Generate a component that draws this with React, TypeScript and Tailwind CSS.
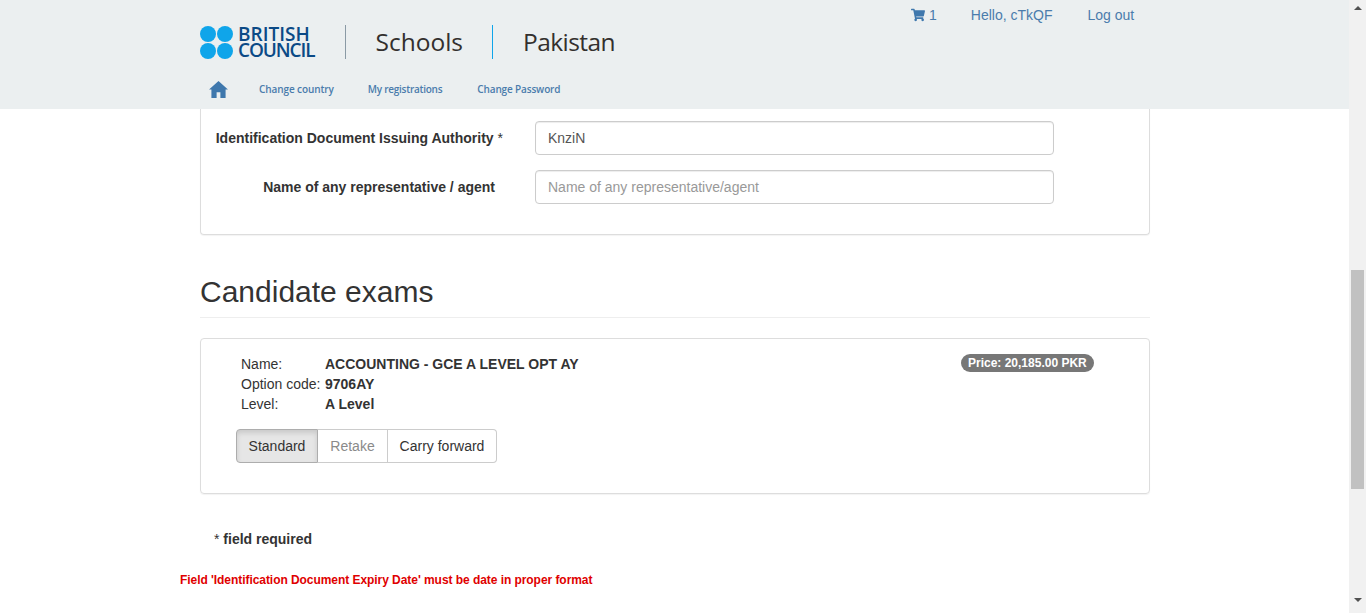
import { FaShoppingCart } from 'react-icons/fa';

function Logo() {
  return (
    <div className="flex items-center gap-[5px]">
      <div className="grid grid-cols-2 gap-x-px gap-y-px w-[33px]">
        <span className="w-4 h-4 rounded-full bg-[#0fa5ea]" />
        <span className="w-4 h-4 rounded-full bg-[#0fa5ea]" />
        <span className="w-4 h-4 rounded-full bg-[#0fa5ea]" />
        <span className="w-4 h-4 rounded-full bg-[#0fa5ea]" />
      </div>
      <div className="font-['Open_Sans',sans-serif] text-[19px] leading-[16px] font-semibold text-[#0b4a86]">
        <div>BRITISH</div>
        <div className="tracking-[-1.1px]">COUNCIL</div>
      </div>
    </div>
  );
}

function Header() {
  return (
    <header className="h-[109px] bg-[#ebeff0] shrink-0">
      <div className="w-[950px] ml-[200px] relative">
        <div className="flex items-center pt-[25px] h-[59px]">
          <Logo />
          <div className="w-px h-[34px] bg-[#8a9aa5] ml-[31px]" />
          <span className="font-['Open_Sans',sans-serif] text-[24.5px] text-[#33302e] ml-[29px] -mt-[2px]">Schools</span>
          <div className="w-px h-[34px] bg-[#0fa5ea] ml-[29px]" />
          <span className="font-['Open_Sans',sans-serif] text-[24.5px] tracking-[-0.55px] text-[#33302e] ml-[30px] -mt-[2px]">Pakistan</span>
        </div>
        <nav className="flex items-center h-[30px] mt-[15px] font-['Open_Sans',sans-serif] text-[10px] font-semibold tracking-[-0.1px] text-[#4a7cac]">
          <svg viewBox="0 0 20 18" className="w-[19px] h-[17px] ml-[9px] mr-[31px] fill-[#3f78ad]">
            <path d="M10 0 L20 9 L17.5 9 L17.5 18 L12 18 L12 12 L8 12 L8 18 L2.5 18 L2.5 9 L0 9 Z" />
          </svg>
          <span>Change country</span>
          <span className="ml-[34px] tracking-[-0.25px]">My registrations</span>
          <span className="ml-[35px] tracking-[-0.15px]">Change Password</span>
        </nav>
        <div className="absolute top-[5px] left-[711px] flex items-center text-sm text-[#4a7cac]">
          <FaShoppingCart className="w-[14px] h-[14px] text-[#3f78ad]" />
          <span className="ml-[4px]">1</span>
          <span className="ml-[34px]">Hello, cTkQF</span>
          <span className="ml-[35px]">Log out</span>
        </div>
      </div>
    </header>
  );
}

function FormRow({ label, star, value, placeholder }: { label: string; star?: boolean; value?: string; placeholder?: string }) {
  return (
    <div className="flex items-center h-[34px]">
      <label className={`w-[303px] text-right font-bold whitespace-nowrap ${star ? '' : 'pr-[8px]'}`}>
        <span className="relative -left-px">
          {label}
          {star && <span className="font-normal"> *</span>}
        </span>
      </label>
      <input
        readOnly
        value={value}
        placeholder={placeholder}
        className="ml-[31px] w-[519px] h-[34px] px-3 rounded border border-[#ccc] bg-white text-[#555] placeholder:text-[#999] shadow-[inset_0_1px_1px_rgba(0,0,0,0.075)]"
      />
    </div>
  );
}

function Scrollbar() {
  return (
    <div className="w-[17px] h-[613px] shrink-0 bg-[#f1f1f1] flex flex-col items-center">
      <div className="mt-[6px] w-0 h-0 border-x-[4px] border-x-transparent border-b-[4px] border-b-[#505050]" />
      <div className="mt-[260px] w-[13px] h-[219px] bg-[#c1c1c1]" />
      <div className="mt-[109px] w-0 h-0 border-x-[4px] border-x-transparent border-t-[4px] border-t-[#505050]" />
    </div>
  );
}

export default function App() {
  return (
    <div className="flex h-[613px] w-[1366px] overflow-hidden bg-white font-['Liberation_Sans',Arial,sans-serif] text-sm text-[#333]">
      <div className="flex-1 flex flex-col min-w-0">
        <Header />
        <main className="w-[950px] ml-[200px]">
          {/* Registration form, cut off by the header */}
          <div className="h-[126px] pt-[12px] flex flex-col gap-[15px] border border-t-0 border-[#ddd] rounded-b shadow-[0_1px_1px_rgba(0,0,0,0.05)]">
            <FormRow label="Identification Document Issuing Authority" star value="KnziN" />
            <FormRow label="Name of any representative / agent" placeholder="Name of any representative/agent" />
          </div>

          <h2 className="mt-[40px] text-[30px] leading-[33px] pb-[9px] border-b border-[#eee]">Candidate exams</h2>

          <div className="mt-[20px] h-[156px] border border-[#ddd] rounded shadow-[0_1px_1px_rgba(0,0,0,0.05)] relative pt-[15px]">
            <span className="absolute left-[760px] top-[15px] h-[18px] px-[7px] rounded-[10px] bg-[#777] text-white text-xs font-bold leading-[18px]">
              Price: 20,185.00 PKR
            </span>
            <div className="grid grid-cols-[84px_1fr] ml-[40px] leading-[20px]">
              <span>Name:</span>
              <span className="font-bold">ACCOUNTING - GCE A LEVEL OPT AY</span>
              <span>Option code:</span>
              <span className="font-bold">9706AY</span>
              <span>Level:</span>
              <span className="font-bold">A Level</span>
            </div>
            <div className="flex ml-[35px] mt-[15px] h-[34px] w-max">
              <button className="w-[82px] border border-[#adadad] rounded-l bg-[#e6e6e6] shadow-[inset_0_3px_5px_rgba(0,0,0,0.125)]">Standard</button>
              <button className="w-[70px] border border-l-0 border-[#ccc] text-[#8a8a8a]">Retake</button>
              <button className="w-[109px] border border-l-0 border-[#ccc] rounded-r">Carry forward</button>
            </div>
          </div>

          <p className="mt-[35px] ml-[14px] leading-[20px]">
            * <span className="font-bold">field required</span>
          </p>
          <p className="mt-[23px] -ml-[20px] text-xs font-bold tracking-[-0.055px] text-[#e00000] leading-[17px]">
            Field 'Identification Document Expiry Date' must be date in proper format
          </p>
        </main>
      </div>
      <Scrollbar />
    </div>
  );
}
